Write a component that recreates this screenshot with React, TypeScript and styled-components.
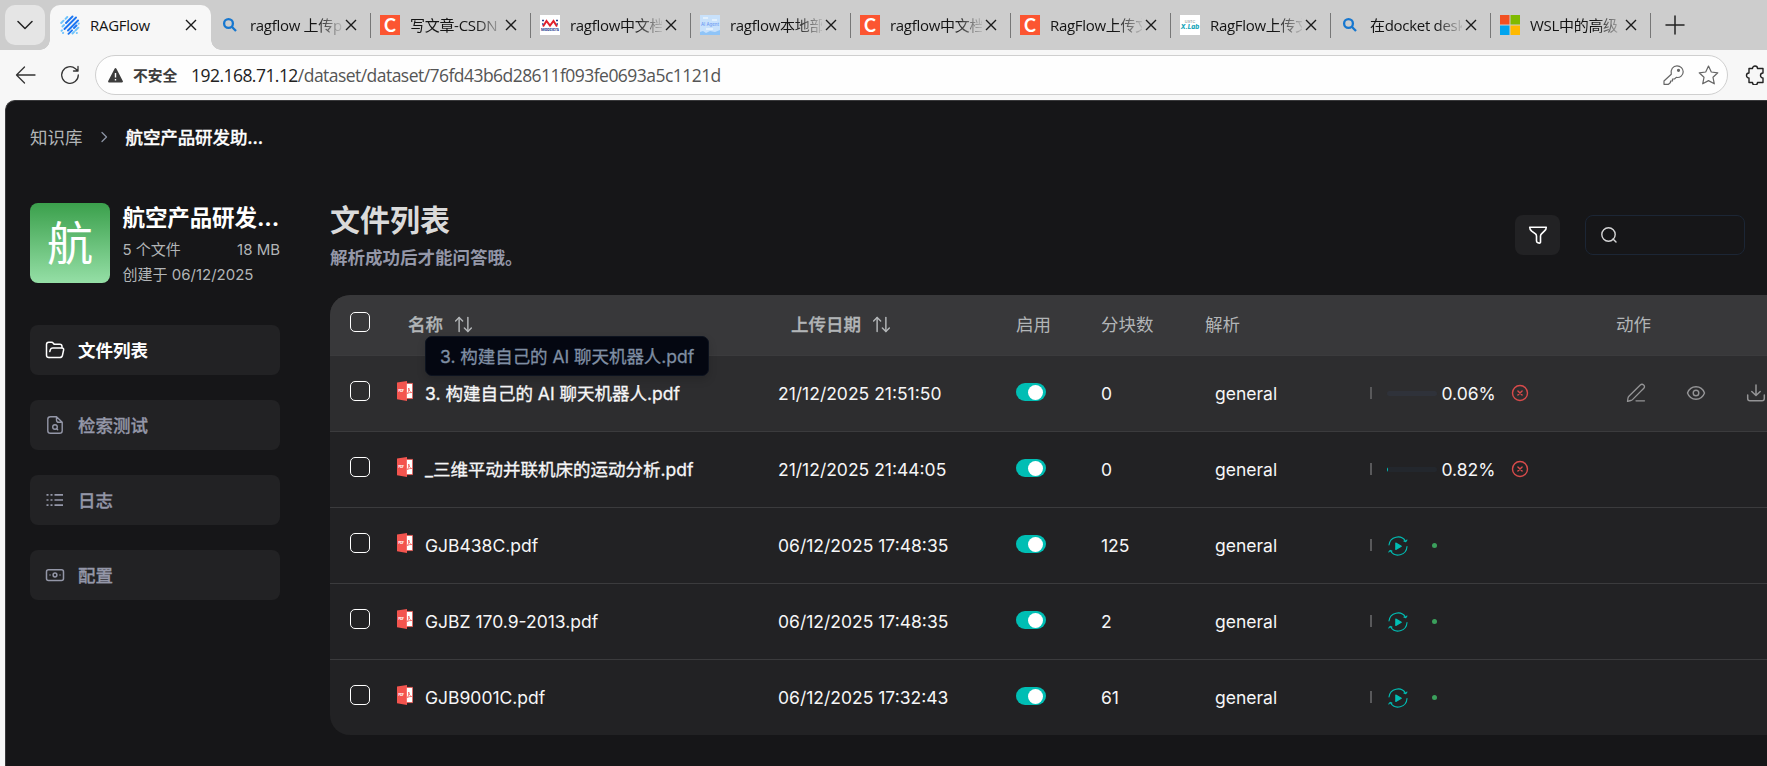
import React from "react";
import styled, { createGlobalStyle, css } from "styled-components";
import { ArrowUpDown } from "lucide-react";

const ui = `"Open Sans", "Noto Sans CJK SC", sans-serif`;
const body = `Inter, "Noto Sans CJK SC", sans-serif`;

const Global = createGlobalStyle`
  *, *::before, *::after { box-sizing: border-box; }
  body { margin: 0; background: #f7f7f7; overflow: hidden; }
  svg { display: block; flex: none; }
`;

/* ---------- browser chrome ---------- */

const Window = styled.div`
  width: 100vw;
  height: 100vh;
  display: flex;
  flex-direction: column;
  overflow: hidden;
  background: #f7f7f7;
  font-family: ${ui};
`;

const TabBar = styled.div`
  height: 50px;
  flex: none;
  display: flex;
  align-items: flex-end;
  padding-left: 5px;
  background: #cdcdcd;
`;

const TabMenu = styled.button`
  width: 40px;
  height: 40px;
  margin: 0 5px 5px 0;
  border: 0;
  padding: 0;
  border-radius: 10px;
  background: #e5e5e5;
  display: grid;
  place-items: center;
`;

const Tab = styled.div<{ $active?: boolean }>`
  position: relative;
  width: ${(p) => (p.$active ? 161 : 160)}px;
  height: 45px;
  flex: none;
  display: flex;
  align-items: center;
  padding: 0 12px 5px ${(p) => (p.$active ? 9 : 8)}px;
  ${(p) =>
    p.$active &&
    css`
      background: #f7f7f7;
      border-radius: 10px 10px 0 0;
      &::before,
      &::after {
        content: "";
        position: absolute;
        bottom: 0;
        width: 10px;
        height: 10px;
      }
      &::before {
        left: -10px;
        background: radial-gradient(circle at 0 0, transparent 9.5px, #f7f7f7 10px);
      }
      &::after {
        right: -10px;
        background: radial-gradient(circle at 100% 0, transparent 9.5px, #f7f7f7 10px);
      }
    `}
`;

const Favicon = styled.span`
  width: 22px;
  display: grid;
  place-items: center;
  flex: none;
`;

const TabTitle = styled.span<{ $fade?: boolean }>`
  width: 92px;
  margin-left: 9px;
  white-space: nowrap;
  font-size: 15px;
  line-height: 24px;
  letter-spacing: -0.3px;
  color: #141414;
  ${(p) =>
    p.$fade &&
    css`
      mask-image: linear-gradient(90deg, #000 66px, transparent 95px);
    `}
`;

const TabDivider = styled.i`
  position: absolute;
  right: 0;
  top: 8px;
  width: 1px;
  height: 25px;
  background: #777;
`;

const CloseWrap = styled.span`
  margin-left: 3px;
  width: 12px;
  flex: none;
`;

const NewTab = styled.span`
  margin: 0 0 15px 14px;
`;

const Toolbar = styled.div`
  height: 50px;
  flex: none;
  display: flex;
  align-items: center;
  padding-left: 15px;
`;

const ReloadSlot = styled.span`
  margin-left: 24px;
`;

const Address = styled.div`
  width: 1633px;
  height: 40px;
  flex: none;
  margin-left: 15px;
  display: flex;
  align-items: center;
  padding: 0 8px 0 12px;
  border: 1px solid #cfcfcf;
  border-radius: 20px;
  background: #fefefe;
`;

const Insecure = styled.span`
  width: 58px;
  margin-left: 10px;
  padding-bottom: 2px;
  font-size: 14.8px;
  font-weight: 600;
  color: #3d3d3d;
`;

const Url = styled.span`
  flex: 1;
  padding-bottom: 1px;
  font-size: 17.5px;
  letter-spacing: -0.54px;
  color: #555;
  b {
    font-weight: 400;
    color: #222;
  }
`;

const AddressActions = styled.span`
  display: flex;
  gap: 14px;
`;

const PuzzleSlot = styled.span`
  margin-left: 17px;
`;

/* ---------- page ---------- */

const Page = styled.div`
  flex: 1;
  min-height: 0;
  margin-left: 5px;
  border-radius: 10px 0 0 0;
  border-top: 1px solid #39393b;
  border-left: 1px solid #39393b;
  background: #161618;
  font-family: ${body};
  color: #f4f4f5;
  overflow: hidden;
`;

const mediumStroke = css`
  -webkit-text-stroke: 0.3px currentColor;
`;

const Breadcrumb = styled.nav`
  height: 72px;
  padding-left: 24px;
  display: flex;
  align-items: center;
  font-size: 17.5px;
  line-height: 25px;
  color: #b2b5b7;
  strong {
    font-weight: 500;
    letter-spacing: -0.1px;
    color: #fff;
    ${mediumStroke}
  }
`;

const CrumbArrow = styled.span`
  margin: 0 15px 0 14px;
`;

const Columns = styled.div`
  display: flex;
  padding: 29px 0 0 24px;
`;

const Sidebar = styled.aside`
  width: 250px;
  flex: none;
  margin-right: 50px;
`;

const Dataset = styled.div`
  height: 82px;
  display: flex;
  gap: 12.5px;
  padding-top: 1px;
`;

const Avatar = styled.div`
  width: 80px;
  height: 80px;
  flex: none;
  border-radius: 8px;
  background: linear-gradient(#3ba04c, #95dfa6);
  display: grid;
  place-items: center;
  font-size: 46px;
  line-height: 80px;
  color: #fff;
`;

const DatasetInfo = styled.div`
  flex: 1;
  font-size: 15px;
  line-height: 25px;
  color: #b2b5b7;
`;

const DatasetName = styled.div`
  height: 34px;
  font-size: 22.5px;
  line-height: 30px;
  font-weight: 700;
  letter-spacing: -0.1px;
  color: #fff;
  white-space: nowrap;
`;

const Meta = styled.div`
  height: 25px;
  display: flex;
  justify-content: space-between;
`;

const Menu = styled.div`
  margin-top: 41px;
  display: flex;
  flex-direction: column;
  gap: 25px;
`;

const MenuItem = styled.div<{ $active?: boolean }>`
  height: 50px;
  border-radius: 8px;
  background: #222224;
  display: flex;
  align-items: center;
  gap: 13px;
  padding-left: 15px;
  font-size: 17.5px;
  font-weight: ${(p) => (p.$active ? 700 : 500)};
  color: ${(p) => (p.$active ? "#fff" : "#9497a8")};
  ${(p) => !p.$active && mediumStroke}
`;

const MenuLabel = styled.span`
  padding-bottom: 2px;
`;

const Main = styled.main`
  flex: 1;
  min-width: 0;
`;

const Header = styled.header`
  height: 93px;
  display: flex;
  align-items: flex-start;
  justify-content: space-between;
  padding-right: 22px;
`;

const Title = styled.h1`
  margin: 0;
  font-size: 30px;
  line-height: 36px;
  font-weight: 700;
  color: #dadada;
`;

const Subtitle = styled.p`
  margin: 7px 0 0;
  font-size: 17.5px;
  line-height: 25px;
  font-weight: 700;
  color: #9497a8;
`;

const Tools = styled.div`
  display: flex;
  gap: 25px;
  padding-top: 13px;
`;

const FilterButton = styled.button`
  width: 45px;
  height: 40px;
  border: 0;
  padding: 0;
  border-radius: 8px;
  background: #222224;
  display: grid;
  place-items: center;
`;

const SearchBox = styled.div`
  width: 160px;
  height: 40px;
  border: 1px solid #1c2635;
  border-radius: 8px;
  display: flex;
  align-items: center;
  padding-left: 14px;
`;

const Table = styled.div`
  width: 1500px;
  border-radius: 20px 0 0 20px;
  background: #222224;
  overflow: hidden;
  font-size: 17.5px;
`;

const Row = styled.div<{ $head?: boolean; $hover?: boolean }>`
  display: grid;
  grid-template-columns: 47px 381px 238px 85px 104px 165px 246px 1fr;
  align-items: center;
  padding-left: 20px;
  height: ${(p) => (p.$head ? 61 : 76)}px;
  border-bottom: 1px solid #3b3b3d;
  background: ${(p) => (p.$head ? "#38383a" : p.$hover ? "#2d2d2f" : "transparent")};
  color: ${(p) => (p.$head ? "#b2b5b7" : "#f6f6f7")};
  &:last-child {
    height: 75px;
    border-bottom: 0;
  }
`;

const HeadCell = styled.span<{ $indent?: number }>`
  display: flex;
  align-items: center;
  gap: 10px;
  padding-left: ${(p) => p.$indent ?? 0}px;
  padding-bottom: 3px;
  font-weight: ${(p) => (p.$indent ? 500 : 400)};
  ${(p) => p.$indent && mediumStroke}
  svg {
    margin-top: 2px;
  }
`;

const Checkbox = styled.span<{ $head?: boolean }>`
  width: 20px;
  height: 20px;
  margin-bottom: ${(p) => (p.$head ? 6 : 5)}px;
  border: 1px solid #fff;
  border-radius: 5px;
`;

const FileCell = styled.div`
  position: relative;
  height: 25px;
  display: flex;
  align-items: center;
  gap: 12px;
  line-height: 25px;
  white-space: nowrap;
  > svg {
    margin-bottom: 5px;
  }
`;

const FileName = styled.span<{ $cjk: boolean }>`
  ${(p) => p.$cjk && mediumStroke}
`;

const Tooltip = styled.div`
  position: absolute;
  left: 28px;
  bottom: 30px;
  z-index: 2;
  height: 40px;
  padding: 0 14px;
  border: 1px solid #0d131f;
  border-radius: 7px;
  background: #040711;
  box-shadow: 0 4px 8px rgba(0, 0, 0, 0.15);
  color: #7f8ea3;
  line-height: 39px;
  letter-spacing: -0.04px;
  ${mediumStroke}
`;

const Text = styled.span<{ $indent?: number }>`
  padding-left: ${(p) => p.$indent ?? 0}px;
  white-space: nowrap;
`;

const Switch = styled.span`
  width: 30px;
  height: 18px;
  margin-bottom: 3px;
  border-radius: 9px;
  background: #00beb4;
  display: flex;
  justify-content: flex-end;
  align-items: center;
  padding-right: 3px;
  &::after {
    content: "";
    width: 15px;
    height: 15px;
    border-radius: 50%;
    background: #fff;
  }
`;

const Status = styled.div`
  display: flex;
  align-items: center;
  height: 24px;
`;

const Bar = styled.i`
  width: 2px;
  height: 12px;
  margin-bottom: 1px;
  background: #59595b;
`;

const Progress = styled.div<{ $hover?: boolean }>`
  width: 50px;
  height: 5px;
  margin: 0 4.5px 0 15px;
  border-radius: 3px;
  background: ${(p) => (p.$hover ? "#2f323a" : "#23272d")};
  overflow: hidden;
`;

const Fill = styled.div`
  height: 100%;
  background: #00beb4;
`;

const Percent = styled.span`
  width: 69px;
`;

const CancelSlot = styled.span`
  padding-bottom: 2px;
`;

const RunSlot = styled.span`
  margin: 0 24px 0 16px;
`;

const Dot = styled.i`
  width: 5px;
  height: 5px;
  border-radius: 50%;
  background: #3ba05c;
`;

const Actions = styled.div`
  display: flex;
  gap: 40px;
  padding: 0 0 1px 10px;
`;

/* ---------- icons ---------- */

const CloseIcon = () => (
  <svg width="12" height="12" viewBox="0 0 12 12" stroke="#1a1a1a" strokeWidth="1.4">
    <path d="M1 1l10 10M11 1L1 11" />
  </svg>
);

const FlowLogo = () => (
  <svg width="20" height="20" viewBox="0 0 20 20" strokeLinecap="round" strokeWidth="1.9" fill="none">
    <path stroke="#6dc3fb" d="M1.200 8l2.300-2.300M5.500 3.800l1.800-1.800M2.500 11.500l1.500-1.500M1.500 15.800l.5-.5M12.500 18.500l1.500-1.500M15.500 15.500l2.800-2.800M18.500 8.800l.3-.3M3 18l.2-.2M16.800 18l.1-.1" />
    <path stroke="#1c76f2" d="M6 8L12.500 1.500M4.500 14L16 2.500M8 15.500L18 5.500M8.500 18.800L12 15.300M14 13l2.500-2.500" />
  </svg>
);

const BlueSearch = () => (
  <svg width="16" height="16" viewBox="0 0 16 16" fill="none" stroke="#1777cf" strokeWidth="2.3">
    <circle cx="6.500" cy="6.500" r="4.400" />
    <path d="M9.800 9.800l4.200 4.200" />
  </svg>
);

const SquareC = styled.span`
  width: 20px;
  height: 20px;
  background: #fc5531;
  color: #fff;
  font: 700 18px/20px Lato, sans-serif;
  text-align: center;
`;

const PortalIcon = () => (
  <svg width="20" height="20" viewBox="0 0 20 20">
    <rect width="20" height="20" fill="#fff" />
    <path d="M3 11.500L6.500 6L10 10.500L13.500 6L17 11.500" fill="none" stroke="#e2202c" strokeWidth="2" />
    <path d="M2 5.500h2M16 5.500h2M2 9h1.500M16.500 9H18" stroke="#24408e" strokeWidth="1.500" />
    <text x="10" y="16" textAnchor="middle" fontSize="3.900" fontWeight="700" fontFamily="Inter" fill="#24408e">Modelers</text>
  </svg>
);

const AgentIcon = () => (
  <svg width="20" height="20" viewBox="0 0 20 20">
    <rect width="20" height="20" fill="#c8e1fb" />
    <path d="M0 17l3-1 3 2 4-2 5 1 5-2v5H0z" fill="#8fc4f7" />
    <path d="M3 3h5M12 5h5M6 14h7" stroke="#e2f0fd" strokeWidth="2" />
    <text x="10" y="11" textAnchor="middle" fontSize="4.400" fontWeight="500" fontFamily="Inter" fill="#6f9cf3">AI Agent</text>
  </svg>
);

const LabIcon = () => (
  <svg width="20" height="20" viewBox="0 0 20 20">
    <rect width="20" height="20" fill="#fff" />
    <text x="10" y="7.500" textAnchor="middle" fontSize="3.800" fontFamily="Inter" fill="#777">USTC</text>
    <text x="10" y="13.800" textAnchor="middle" fontSize="6.200" fontWeight="800" fontStyle="italic" fontFamily="Inter" fill="#13a5b8">X.Lab</text>
  </svg>
);

const WindowsIcon = () => (
  <svg width="20" height="20" viewBox="0 0 20 20">
    <path fill="#f25022" d="M0 0h9.500v9.500H0z" />
    <path fill="#7fba00" d="M10.500 0H20v9.500h-9.500z" />
    <path fill="#00a4ef" d="M0 10.500h9.500V20H0z" />
    <path fill="#ffb900" d="M10.500 10.500H20V20h-9.500z" />
  </svg>
);

const Chrome = ({ w = 20, h = 20, d, sw = 1.3, color = "#333" }: { w?: number; h?: number; d: string; sw?: number; color?: string }) => (
  <svg width={w} height={h} viewBox={`0 0 ${w} ${h}`} fill="none" stroke={color} strokeWidth={sw} strokeLinecap="round" strokeLinejoin="round">
    <path d={d} />
  </svg>
);

const PdfIcon = () => (
  <svg width="16" height="20" viewBox="0 0 16 20">
    <path fill="#f3544e" d="M0 1.500L10 0v20L0 18.200z" />
    <path fill="#fff" stroke="#f3544e" strokeWidth=".8" d="M9.400 2.400h6.200v15.200H9.400z" />
    <path d="M10 12.500c1.500-1 2-3 1.700-5.500.5 3 1.500 4 3 4.500-1.500 0-3 .2-4.700 1z" fill="none" stroke="#f3544e" strokeWidth=".8" />
    <text x="1.200" y="10.800" fontSize="3.600" fontWeight="600" fontFamily="Inter" fill="#fff" textLength="5.800">PDF</text>
  </svg>
);

const line = { fill: "none", stroke: "currentColor", strokeLinecap: "round" as const, strokeLinejoin: "round" as const };

const FolderIcon = () => (
  <svg width="20" height="20" viewBox="0 0 20 20" {...line} strokeWidth="1.500">
    <path d="M4 17.500C2.200 17.500 1.500 16.700 1.500 15.200V4.500C1.500 3 2.300 2.200 3.700 2.200h2.800c.9 0 1.400.3 1.900 1.100l.7 1h5.700c1.500 0 2.200.8 2.200 2.200v1" />
    <path d="M4.800 11.600l.5-1.800c.4-1.200 1.100-1.900 2.400-1.900h9.200c1.300 0 2 .9 1.700 2.100l-1.100 5.200c-.4 1.500-1.200 2.300-2.700 2.300H4" />
  </svg>
);

const FileSearchIcon = () => (
  <svg width="20" height="20" viewBox="0 0 20 20" {...line} strokeWidth="1.400">
    <path d="M11.500 1.700H5.500c-1.800 0-2.700.9-2.700 2.600v11.400c0 1.700.9 2.600 2.700 2.600h9c1.800 0 2.700-.9 2.700-2.600V7.300zM11.500 1.900v3c0 1.500.8 2.400 2.300 2.400h3.200" />
    <circle cx="10" cy="12" r="2.300" />
    <path d="M11.700 13.700l1 1" />
  </svg>
);

const LogIcon = () => (
  <svg width="20" height="20" viewBox="0 0 20 20" {...line} strokeLinecap="butt" strokeWidth="1.700">
    <path d="M9.500 4.800H18M9.500 10H18M9.500 15.200H18M1.500 4.800h2M1.500 10h2M1.500 15.200h2M5.500 4.800h2M5.500 10h2M5.500 15.200h2" />
  </svg>
);

const ConfigIcon = () => (
  <svg width="20" height="20" viewBox="0 0 20 20" {...line} strokeWidth="1.500">
    <rect x="1.500" y="4.700" width="17" height="10.700" rx="2" />
    <circle cx="10" cy="10" r="1.900" />
    <path d="M5 10h.01M15 10h.01" />
  </svg>
);

const FunnelIcon = () => (
  <svg width="20" height="20" viewBox="0 0 20 20" {...line} stroke="#fff" strokeWidth="1.600">
    <path d="M1.700 2.200h16.600c0 2-.6 2.700-2 4l-2.800 2.700c-.8.8-1 1.300-1 2.400v5.600c0 1-.6 1.400-1.500 1.200l-1.200-.4c-.9-.3-1.300-.7-1.300-1.700v-4.700c0-1.100-.2-1.600-1-2.400L3.700 6.200c-1.400-1.300-2-2-2-4z" />
  </svg>
);

const SearchIcon = () => (
  <svg width="18" height="18" viewBox="0 0 18 18" {...line} stroke="#d5d5d6" strokeWidth="1.400">
    <circle cx="8.500" cy="8.500" r="6.700" />
    <path d="M13 13l3 3" />
  </svg>
);

const CancelIcon = () => (
  <svg width="18" height="18" viewBox="0 0 18 18" {...line} stroke="#d84b4b" strokeWidth="1.400">
    <circle cx="9" cy="9" r="7.500" />
    <path d="M6.900 6.900l4.200 4.200M11.100 6.900l-4.200 4.200" />
  </svg>
);

const RunIcon = () => (
  <svg width="20" height="20" viewBox="0 0 20 20" {...line} stroke="#00beb4" strokeWidth="1.100">
    <path d="M1 9A9 9 0 0 1 17.600 5.200M19 10.500a9 9 0 0 1-16.600 4.300M18.900 4l-1.100 1.700-1.900-.6M.8 16l1.400-1.600 1.700.7" />
    <path d="M7.800 7v6.500l5.500-3.200z" fill="#00beb4" />
  </svg>
);

const PenIcon = () => (
  <svg width="20" height="20" viewBox="0 0 20 20" {...line} stroke="#949496" strokeWidth="1.300">
    <path d="M1.500 18.300l.5-3.300c.1-.7.4-1.200.9-1.700L14.300 2c2.200-2 5.500.9 3.500 3.300L6.500 16.600c-.5.500-1 .8-1.700.9zM10 17.800h8.500" />
  </svg>
);

const EyeIcon = () => (
  <svg width="20" height="20" viewBox="0 0 20 20" {...line} stroke="#949496" strokeWidth="1.400">
    <path d="M1.500 10C3 6 6 3.800 10 3.800S17 6 18.500 10C17 14 14 16.200 10 16.200S3 14 1.500 10z" />
    <circle cx="10" cy="10" r="2.800" />
  </svg>
);

const DownloadIcon = () => (
  <svg width="20" height="20" viewBox="0 0 20 20" {...line} stroke="#949496" strokeWidth="1.500">
    <path d="M1.700 12v3.500c0 1.600.8 2.300 2.300 2.300h12c1.500 0 2.300-.7 2.300-2.300V12M10 2v10M5.800 8.500L10 12.500l4.200-4" />
  </svg>
);

const SortIcon = () => <ArrowUpDown size={21} strokeWidth={1.700} />;

/* ---------- data ---------- */

const tabs: { title: string; icon: React.ReactNode }[] = [
  { title: "ragflow 上传p", icon: <BlueSearch /> },
  { title: "写文章-CSDN", icon: <SquareC>C</SquareC> },
  { title: "ragflow中文档", icon: <PortalIcon /> },
  { title: "ragflow本地部", icon: <AgentIcon /> },
  { title: "ragflow中文档", icon: <SquareC>C</SquareC> },
  { title: "RagFlow上传文", icon: <SquareC>C</SquareC> },
  { title: "RagFlow上传文", icon: <LabIcon /> },
  { title: "在docket desk", icon: <BlueSearch /> },
  { title: "WSL中的高级", icon: <WindowsIcon /> },
];

const menu = [
  { label: "文件列表", icon: <FolderIcon />, active: true },
  { label: "检索测试", icon: <FileSearchIcon /> },
  { label: "日志", icon: <LogIcon /> },
  { label: "配置", icon: <ConfigIcon /> },
];

const files: { name: string; date: string; chunks: number; progress?: number; hover?: boolean }[] = [
  { name: "3. 构建自己的 AI 聊天机器人.pdf", date: "21/12/2025 21:51:50", chunks: 0, progress: 0.06, hover: true },
  { name: "_三维平动并联机床的运动分析.pdf", date: "21/12/2025 21:44:05", chunks: 0, progress: 0.82 },
  { name: "GJB438C.pdf", date: "06/12/2025 17:48:35", chunks: 125 },
  { name: "GJBZ 170.9-2013.pdf", date: "06/12/2025 17:48:35", chunks: 2 },
  { name: "GJB9001C.pdf", date: "06/12/2025 17:32:43", chunks: 61 },
];

export default function App() {
  return (
    <Window>
      <Global />
      <TabBar>
        <TabMenu>
          <Chrome w={16} h={10} d="M1 1.500l7 7 7-7" sw={1.500} color="#222" />
        </TabMenu>
        <Tab $active>
          <Favicon><FlowLogo /></Favicon>
          <TabTitle>RAGFlow</TabTitle>
          <CloseWrap><CloseIcon /></CloseWrap>
        </Tab>
        {tabs.map((t, i) => (
          <Tab key={i}>
            <Favicon>{t.icon}</Favicon>
            <TabTitle $fade>{t.title}</TabTitle>
            <CloseWrap><CloseIcon /></CloseWrap>
            <TabDivider />
          </Tab>
        ))}
        <NewTab><Chrome d="M10 1v18M1 10h18" sw={1.500} color="#222" /></NewTab>
      </TabBar>

      <Toolbar>
        <Chrome w={21} d="M20 10H1.500M9.500 2L1.500 10l8 8" />
        <ReloadSlot>
          <Chrome d="M18.300 10a8.300 8.300 0 1 1-2.800-6.200L18 6M18 1.500V6h-4.500" />
        </ReloadSlot>
        <Address>
          <svg width="15" height="15" viewBox="0 0 15 15">
            <path d="M7.500 1L14 13.500H1z" fill="#3d3d3d" stroke="#3d3d3d" strokeWidth="1.800" strokeLinejoin="round" />
            <path d="M7.500 5v4.500M7.500 11v1.500" stroke="#fff" strokeWidth="1.400" />
          </svg>
          <Insecure>不安全</Insecure>
          <Url><b>192.168.71.12</b>/dataset/dataset/76fd43b6d28611f093fe0693a5c1121d</Url>
          <AddressActions>
            <svg width="21" height="20" viewBox="0 0 21 20" fill="none" stroke="#666" strokeWidth="1.200" strokeLinejoin="round">
              <path d="M8.300 9.200C7.300 4.500 10 .8 14 .8c3.500 0 6.200 2.700 6.200 6s-3 6.300-6.900 5.600L11.500 14H9.500v2H7.500v1.500L5.500 19.300H1V16z" />
              <circle cx="15.500" cy="5.300" r="1" fill="#666" />
            </svg>
            <svg width="21" height="20" viewBox="0 0 21 20" fill="none" stroke="#666" strokeWidth="1.200" strokeLinejoin="round">
              <path d="M10.500 1l2.800 6 6.500.8-4.800 4.500 1.300 6.500-5.800-3.200-5.800 3.200L6 12.300 1.200 7.800l6.500-.8z" />
            </svg>
          </AddressActions>
        </Address>
        <PuzzleSlot>
          <Chrome sw={1.400} color="#222" w={20} d="M4 3.500h3.500a2.500 2.500 0 0 1 5 0H18V8a2.500 2.500 0 0 0 0 5v4.500h-5.500a2.500 2.500 0 0 1-5 0H4V13a2.500 2.500 0 0 1 0-5z" />
        </PuzzleSlot>
      </Toolbar>

      <Page>
        <Breadcrumb>
          知识库
          <CrumbArrow><Chrome w={14} h={14} d="M5 2.500l4.500 4.500L5 11.500" color="#8b93a3" /></CrumbArrow>
          <strong>航空产品研发助...</strong>
        </Breadcrumb>
        <Columns>
          <Sidebar>
            <Dataset>
              <Avatar>航</Avatar>
              <DatasetInfo>
                <DatasetName>航空产品研发...</DatasetName>
                <Meta><span>5 个文件</span><span>18 MB</span></Meta>
                <Meta>创建于 06/12/2025</Meta>
              </DatasetInfo>
            </Dataset>
            <Menu>
              {menu.map((m) => (
                <MenuItem key={m.label} $active={m.active}>
                  {m.icon}
                  <MenuLabel>{m.label}</MenuLabel>
                </MenuItem>
              ))}
            </Menu>
          </Sidebar>
          <Main>
            <Header>
              <div>
                <Title>文件列表</Title>
                <Subtitle>解析成功后才能问答哦。</Subtitle>
              </div>
              <Tools>
                <FilterButton><FunnelIcon /></FilterButton>
                <SearchBox><SearchIcon /></SearchBox>
              </Tools>
            </Header>
            <Table>
              <Row $head>
                <Checkbox $head />
                <HeadCell $indent={11}>名称 <SortIcon /></HeadCell>
                <HeadCell $indent={13}>上传日期 <SortIcon /></HeadCell>
                <HeadCell>启用</HeadCell>
                <HeadCell>分块数</HeadCell>
                <HeadCell>解析</HeadCell>
                <span />
                <HeadCell>动作</HeadCell>
              </Row>
              {files.map((f) => (
                <Row key={f.name} $hover={f.hover}>
                  <Checkbox />
                  <FileCell>
                    <PdfIcon />
                    <FileName $cjk={/[\u4e00-\u9fff]/.test(f.name)}>{f.name}</FileName>
                    {f.hover && <Tooltip>{f.name}</Tooltip>}
                  </FileCell>
                  <Text>{f.date}</Text>
                  <Switch />
                  <Text>{f.chunks}</Text>
                  <Text $indent={10}>general</Text>
                  <Status>
                    <Bar />
                    {f.progress !== undefined ? (
                      <>
                        <Progress $hover={f.hover}>
                          <Fill style={{ width: `${f.progress}%` }} />
                        </Progress>
                        <Percent>{f.progress}%</Percent>
                        <CancelSlot><CancelIcon /></CancelSlot>
                      </>
                    ) : (
                      <>
                        <RunSlot><RunIcon /></RunSlot>
                        <Dot />
                      </>
                    )}
                  </Status>
                  {f.hover && (
                    <Actions>
                      <PenIcon />
                      <EyeIcon />
                      <DownloadIcon />
                    </Actions>
                  )}
                </Row>
              ))}
            </Table>
          </Main>
        </Columns>
      </Page>
    </Window>
  );
}
